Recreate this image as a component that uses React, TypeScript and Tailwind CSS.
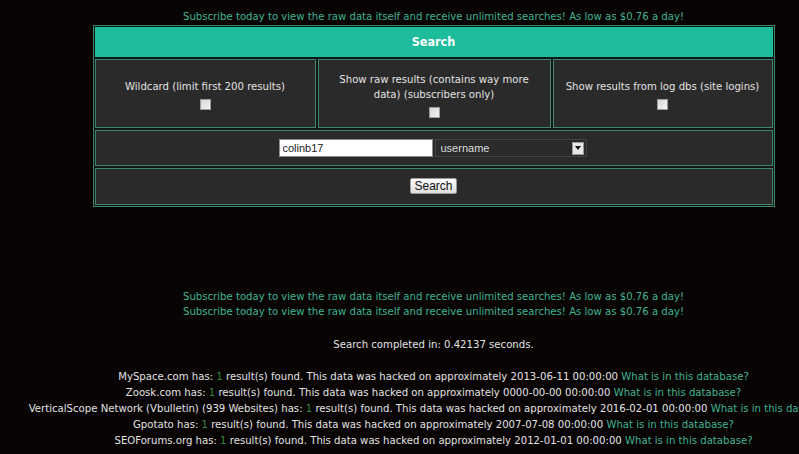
import * as React from "react";

type Breach = {
  site: string;
  count: number;
  date: string;
};

const breaches: Breach[] = [
  { site: "MySpace.com", count: 1, date: "2013-06-11 00:00:00" },
  { site: "Zoosk.com", count: 1, date: "0000-00-00 00:00:00" },
  { site: "VerticalScope Network (Vbulletin) (939 Websites)", count: 1, date: "2016-02-01 00:00:00" },
  { site: "Gpotato", count: 1, date: "2007-07-08 00:00:00" },
  { site: "SEOForums.org", count: 1, date: "2012-01-01 00:00:00" },
];

const promo = "Subscribe today to view the raw data itself and receive unlimited searches! As low as $0.76 a day!";

function Box() {
  return (
    <span className="mx-auto mt-[5px] block h-[11px] w-[11px] border border-[#9a9a9a] bg-gradient-to-br from-[#d8d8d8] to-[#f4f4f4]" />
  );
}

function OptionCell({ children }: { children: React.ReactNode }) {
  return (
    <div className="flex flex-col items-center justify-center whitespace-nowrap border border-[#3f8470] bg-[#2b2a2a] px-1 pt-[2px] text-center leading-[15px]">
      <div>{children}</div>
      <Box />
    </div>
  );
}

export default function App() {
  return (
    <div className="h-[454px] w-full overflow-hidden bg-[#080404] font-['DejaVu_Sans_Condensed','Liberation_Sans',sans-serif] text-[11.25px] text-[#e2e2e2]">
      <div className="w-[867px]">
        <p className="pt-[9px] text-center leading-[15px] text-[#3fb391]">{promo}</p>

        <div className="mx-auto mt-[1px] flex w-[682px] flex-col gap-[2px] border border-[#3f8470] bg-[#111716] p-[1px]">
          <div className="flex h-[30px] items-center justify-center bg-[#1dbc9b] text-[12.5px] font-bold text-white">
            Search
          </div>

          <div className="grid h-[69px] grid-cols-[221px_233px_1fr] gap-[2px]">
            <OptionCell>Wildcard (limit first 200 results)</OptionCell>
            <OptionCell>
              Show raw results (contains way more
              <br />
              data) (subscribers only)
            </OptionCell>
            <OptionCell>Show results from log dbs (site logins)</OptionCell>
          </div>

          <div className="flex h-[36px] items-center justify-center gap-[2px] border border-[#3f8470] bg-[#2b2a2a] pr-[2px]">
            <input
              readOnly
              value="colinb17"
              className="h-[18px] w-[154px] border border-[#8c8c8c] bg-white px-[3px] font-['Liberation_Sans',sans-serif] text-[11px] text-[#222] outline-none"
            />
            <div className="flex h-[18px] w-[152px] items-center justify-between border border-[#444] bg-[#2a2a2a] pl-[5px] pr-[2px] font-['Liberation_Sans',sans-serif] text-[11px] text-[#dcdcdc]">
              <span>username</span>
              <span className="flex h-[13px] w-[12px] items-center justify-center border border-[#999] bg-[#e8e8e8]">
                <svg width="6" height="4" viewBox="0 0 6 4">
                  <path d="M0 0h6L3 4z" fill="#111" />
                </svg>
              </span>
            </div>
          </div>

          <div className="flex h-[37px] items-center justify-center border border-[#3f8470] bg-[#2b2a2a]">
            <button className="-mt-[1px] h-[16px] w-[47px] rounded-[2px] border border-[#9b9b9b] bg-gradient-to-b from-[#fbfbfb] to-[#dedede] font-['Liberation_Sans',sans-serif] text-[12px] leading-[14px] text-[#111]">
              Search
            </button>
          </div>
        </div>

        <div className="mt-[82px] text-center">
          <p className="leading-[15px] text-[#3fb391]">{promo}</p>
          <p className="leading-[15px] text-[#3fb391]">{promo}</p>
          <p className="mt-[18px] leading-[15px]">Search completed in: 0.42137 seconds.</p>
          <div className="mt-[17px] leading-[16px]">
            {breaches.map((b) => (
              <p key={b.site} className="whitespace-nowrap">
                {b.site} has: <span className="text-[#2f8a3d]">{b.count}</span> result(s) found. This data was hacked on
                approximately {b.date} <span className="text-[#3fb391]">What is in this database?</span>
              </p>
            ))}
          </div>
        </div>
      </div>
    </div>
  );
}
